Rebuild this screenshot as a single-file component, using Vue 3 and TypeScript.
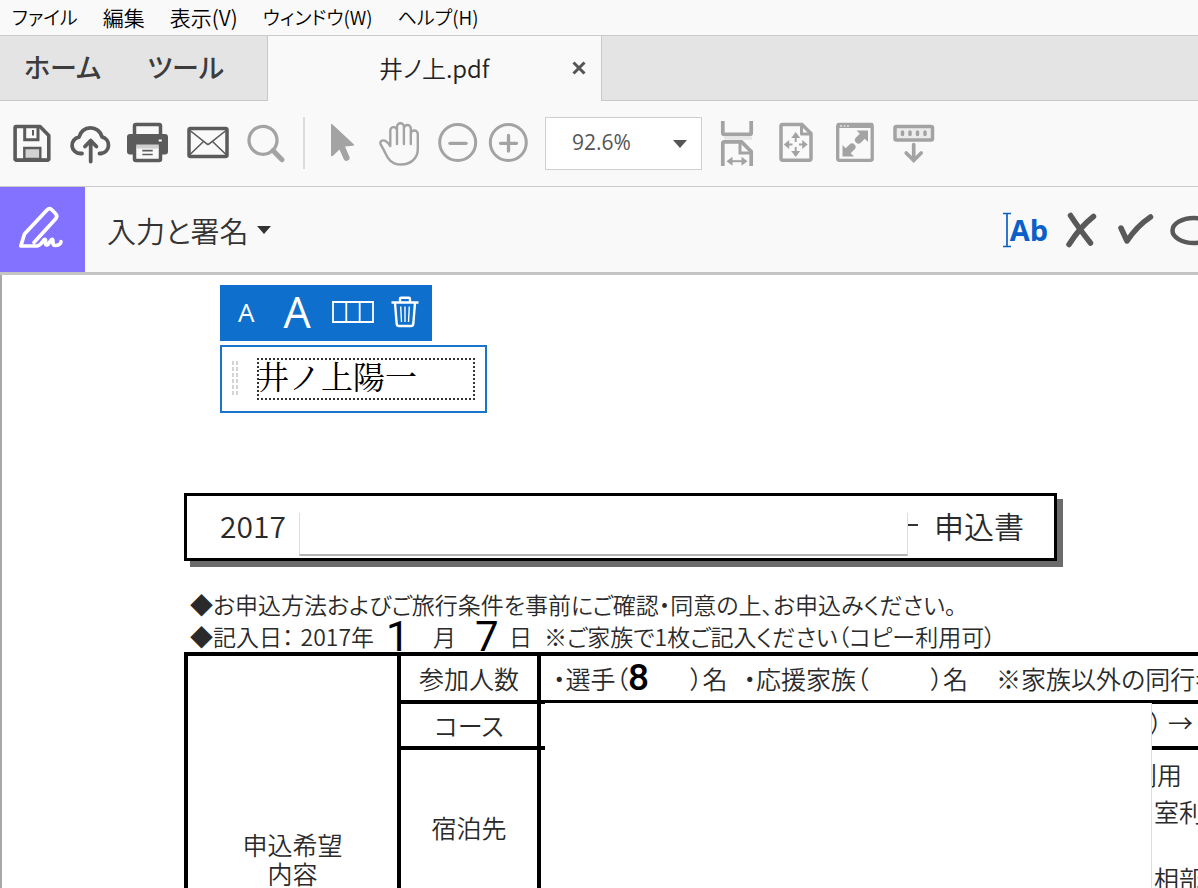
<script setup lang="ts">
import { ref } from 'vue'

interface Menu { label: string; kana: boolean }

const menus: Menu[] = [
  { label: 'ファイル', kana: true },
  { label: '編集', kana: false },
  { label: '表示(V)', kana: false },
  { label: 'ウィンドウ(W)', kana: true },
  { label: 'ヘルプ(H)', kana: true },
]
const zoom = ref('92.6%')
const typed = ref('井ノ上陽一')
</script>

<template>
  <div class="app">
    <nav class="menubar" aria-label="メニュー">
      <button v-for="m in menus" :key="m.label" type="button" :class="{ kana: m.kana }">{{ m.label }}</button>
    </nav>

    <div class="tabs">
      <div class="fixed-tabs">
        <button type="button">ホーム</button>
        <button type="button">ツール</button>
      </div>
      <div class="doc-tab">
        <span class="doc-name">井ノ上.pdf</span>
        <button type="button" class="close" aria-label="閉じる">
          <svg width="14" height="14" viewBox="0 0 14 14"><path d="M1.5 1.5L12.5 12.5M12.5 1.5L1.5 12.5" stroke="#555" stroke-width="3" /></svg>
        </button>
      </div>
      <div class="tab-rest"></div>
    </div>

    <div class="toolbar">
      <div class="group files">
        <button type="button" aria-label="保存">
          <svg viewBox="0 0 44 44" fill="none" stroke="#5b5b5b" stroke-width="3.6" stroke-linejoin="round">
            <path d="M7 5.5H31L39.8 14.5V38a1.2 1.2 0 0 1-1.2 1.2H7.3A1.2 1.2 0 0 1 6.1 38V6.7Q6.1 5.5 7 5.5Z" />
            <path d="M15.7 6V18.7H29V6" stroke-width="3" stroke-linejoin="miter" />
            <path d="M24 9V14.5" stroke-width="2" />
            <path d="M15.3 38V27H31.3V38Z" fill="#d2d2d2" stroke-width="2.4" stroke-linejoin="miter" />
            <path d="M7 39.2H39" />
          </svg>
        </button>
        <button type="button" aria-label="アップロード">
          <svg viewBox="0 0 44 44" fill="none" stroke="#5b5b5b" stroke-width="3.8" stroke-linecap="round" stroke-linejoin="round">
            <path d="M14 32.5H12.5A8.2 8.2 0 0 1 11 16.2A11.8 11.8 0 0 1 34 15.8A8.5 8.5 0 0 1 33 32.5H31.5" />
            <path d="M22.7 40.5V20M17 25.5L22.7 19.5L28.4 25.5" />
          </svg>
        </button>
        <button type="button" aria-label="印刷">
          <svg viewBox="0 0 44 44" fill="none">
            <path d="M7.5 14V5a1.5 1.5 0 0 1 1.5-1.5H32A1.5 1.5 0 0 1 33.5 5V14" stroke="#5b5b5b" stroke-width="3.5" />
            <rect x="0" y="13" width="41" height="20.5" rx="3" fill="#5b5b5b" />
            <rect x="7.5" y="24" width="26" height="15.5" rx="1.5" fill="#f9f9f9" stroke="#5b5b5b" stroke-width="3.5" />
            <rect x="9.2" y="23.5" width="22.6" height="4" fill="#cfcfcf" />
            <path d="M15.3 29.7H25.7M15.3 33.5H25.7" stroke="#5b5b5b" stroke-width="1.7" />
            <rect x="31.5" y="18.5" width="3.5" height="2" rx="1" fill="#fff" />
          </svg>
        </button>
        <button type="button" aria-label="メール">
          <svg viewBox="0 0 44 44" fill="none" stroke="#5b5b5b" stroke-width="3.5">
            <rect x="3" y="7.5" width="38" height="28" rx="1.5" />
            <path d="M4 9.5L20.5 22.7Q22 24 23.5 22.7L40 9.5M4 33.5L17.5 20.5M40 33.5L26.5 20.5" stroke-width="1.6" />
          </svg>
        </button>
        <button type="button" aria-label="検索">
          <svg viewBox="0 0 44 44" fill="none" stroke="#a3a3a3">
            <circle cx="18" cy="19.3" r="14" stroke-width="3.3" />
            <path d="M28 29.5L37 38.7" stroke-width="5" stroke-linecap="round" />
          </svg>
        </button>
      </div>
      <div class="divider"></div>
      <div class="group nav">
        <button type="button" aria-label="選択">
          <svg viewBox="0 0 44 44" fill="#a3a3a3">
            <path d="M11 4Q11 2 12.5 3.5L33.5 23Q35 24.5 33 24.8L25 25.5L29.3 35.5A3 3 0 0 1 23.7 38L19.5 28.5L13 34.8Q11 36 11 34Z" />
          </svg>
        </button>
        <button type="button" aria-label="手のひら">
          <svg viewBox="0 0 44 44" fill="none" stroke="#a3a3a3" stroke-width="2.4" stroke-linecap="round" stroke-linejoin="round">
            <path d="M12.3 24.5V9.5a3.3 3.3 0 0 1 6.7 0V23M19 10V5.7a3.4 3.4 0 0 1 6.9 0V23M25.9 7.5a3.4 3.4 0 0 1 6.9 0V23M32.8 13a3.5 3.5 0 0 1 7 0V28C39.8 38 32 43.5 23 43.5C13 43.5 9.5 37 7 31.5C4.5 26 2.8 24.5 2.4 22.5C2 19.5 5.5 18.7 7.5 20Q10 21.5 12.3 25" />
          </svg>
        </button>
        <button type="button" aria-label="縮小">
          <svg viewBox="0 0 44 44" fill="none" stroke="#a3a3a3" stroke-width="3">
            <circle cx="21.7" cy="21.5" r="18" /><path d="M14 22.3H30" stroke-width="3.3" stroke-linecap="round" />
          </svg>
        </button>
        <button type="button" class="near" aria-label="拡大">
          <svg viewBox="0 0 44 44" fill="none" stroke="#a3a3a3" stroke-width="3">
            <circle cx="22.3" cy="21.5" r="18" /><path d="M14.5 22.3H30.5M22.5 14.5V30" stroke-width="3.3" stroke-linecap="round" />
          </svg>
        </button>
      </div>
      <div class="zoom">
        <select v-model="zoom" aria-label="表示倍率">
          <option>92.6%</option>
          <option>100%</option>
          <option>150%</option>
        </select>
        <svg width="14" height="8" viewBox="0 0 14 8"><path d="M0 0H14L7 8Z" fill="#555" /></svg>
      </div>
      <div class="group files">
        <button type="button" aria-label="幅に合わせる">
          <svg viewBox="0 0 44 44" fill="none" stroke="#a3a3a3" stroke-width="3.7">
            <path d="M7.8 0V12a1.3 1.3 0 0 0 1.3 1.3H34.9A1.3 1.3 0 0 0 36.2 12V0" />
            <path d="M9 17.2H37" stroke="#e6e6e6" stroke-width="3" />
            <path d="M7.8 45V22.2a1.3 1.3 0 0 1 1.3-1.3H26.5L36.2 30.5V45" />
            <path d="M25 21V32H36" stroke-width="3" />
            <path d="M15 40.2H29" stroke-width="2" />
            <path d="M11.5 40.2L17.5 35.7V44.7ZM32.5 40.2L26.5 35.7V44.7Z" fill="#a3a3a3" stroke="none" />
          </svg>
        </button>
        <button type="button" aria-label="全体表示">
          <svg viewBox="0 0 44 44" fill="none" stroke="#a3a3a3" stroke-width="3.5" stroke-linejoin="round">
            <path d="M8.5 3.6H28L37 12.6V37.7a1.5 1.5 0 0 1-1.5 1.5H8.5A1.5 1.5 0 0 1 7 37.7V5.1a1.5 1.5 0 0 1 1.5-1.5Z" />
            <path d="M27.5 4V13H36.5" stroke-width="3" />
            <path d="M21.7 15V21M21.7 26V32M13 23.5H18.5M25 23.5H30.5" stroke-width="2" />
            <path d="M21.7 11L26.2 17H17.2ZM21.7 36L26.2 30H17.2ZM9.7 23.5L15.2 19V28ZM33.7 23.5L28.2 19V28Z" fill="#a3a3a3" stroke="none" />
          </svg>
        </button>
        <button type="button" aria-label="全画面">
          <svg viewBox="0 0 44 44" fill="none" stroke="#a3a3a3" stroke-width="3.3">
            <rect x="4.7" y="3.5" width="34.5" height="35.8" rx="1.5" />
            <path d="M4 4.5H40" stroke-width="5" />
            <path d="M7 5H9M10.5 5H12.5M14 5H16" stroke="#fff" stroke-width="1.2" />
            <path d="M35 9.5V21L31.8 17.8L28 21.5A3 3 0 0 1 23 16.5L26.8 12.8L23.5 9.5ZM9.5 35.5V24L12.7 27.2L16.5 23.5A3 3 0 0 1 21.5 28.5L17.7 32.2L21 35.5Z" fill="#a3a3a3" stroke="none" />
          </svg>
        </button>
        <button type="button" aria-label="ツールを表示">
          <svg viewBox="0 0 44 44" fill="none" stroke="#a3a3a3" stroke-width="3.5">
            <rect x="3" y="5.5" width="37.5" height="13.5" rx="1.5" fill="#ececec" />
            <path d="M10.5 11V13.5M18 11V13.5M25.5 11V13.5M33 11V13.5" stroke-width="3.5" stroke-linecap="round" />
            <path d="M21.7 23.5V39M14.2 32L21.7 39.5L29.2 32" stroke-width="3.7" stroke-linecap="round" />
          </svg>
        </button>
      </div>
    </div>

    <div class="signbar">
      <div class="badge">
        <svg viewBox="0 0 85 85" fill="none" stroke="#fff" stroke-width="3.7" stroke-linecap="round" stroke-linejoin="round">
          <path d="M34 55.5L55.5 32Q58 29 55.5 26.5L51.5 22.5Q49.3 20.5 47 23L24.5 47L20.8 59H37C41.5 58.5 42.5 53.5 44.5 52.5C47 51.5 44 57.5 46.5 58C49 58.5 50.5 51.5 52.5 52.5C54 53.5 51.5 58.5 55 58.5C58.5 58.5 61 57 61 54.5" />
        </svg>
      </div>
      <button type="button" class="sign-menu">
        <span>入力と署名</span>
        <svg width="14" height="8" viewBox="0 0 14 8"><path d="M0 0H14L7 8Z" fill="#333" /></svg>
      </button>
      <div class="sign-tools">
        <button type="button" class="text-tool" aria-label="テキストを追加">
          <svg width="10" height="36" viewBox="0 0 10 36" fill="none" stroke="#0b60c8" stroke-width="1.7"><path d="M1 1.5H9M1 34.5H9M5 1.5V34.5" /></svg>
          <span>Ab</span>
        </button>
        <button type="button" aria-label="バツ印">
          <svg width="36" height="40" viewBox="0 0 36 40" fill="none" stroke="#595959" stroke-width="5.5" stroke-linecap="round"><path d="M6.5 5.5Q14 17 26.5 33M29.5 6.5Q16 17 5 34.5" /></svg>
        </button>
        <button type="button" aria-label="チェック">
          <svg width="40" height="40" viewBox="0 0 40 40" fill="none" stroke="#595959" stroke-width="5.5" stroke-linecap="round" stroke-linejoin="round"><path d="M5 18L11 31Q21 16 34.5 7" /></svg>
        </button>
        <button type="button" class="cut" aria-label="円">
          <svg width="54" height="40" viewBox="0 0 54 40" fill="none" stroke="#595959" stroke-width="4.5"><ellipse cx="25" cy="20.5" rx="21.5" ry="12.5" /></svg>
        </button>
      </div>
    </div>

    <main class="page">
      <div class="annotation">
        <div class="mini">
          <button type="button" class="small-a">A</button>
          <button type="button" class="big-a">A</button>
          <button type="button" class="comb" aria-label="マス目">
            <svg width="42" height="22" viewBox="0 0 42 22" fill="none" stroke="#fff" stroke-width="1.8"><path d="M1 1H41V21H1ZM14.3 1V21M27.7 1V21" /></svg>
          </button>
          <button type="button" aria-label="削除">
            <svg width="28" height="32" viewBox="0 0 28 32" fill="none" stroke="#fff" stroke-width="2.4" stroke-linejoin="round">
              <path d="M.5 6.5H27.5M9 6V3Q9 1.8 10.2 1.8H17.8Q19 1.8 19 3V6M4 7L5.7 28Q6 30 8 30H20Q22 30 22.3 28L24 7" />
              <path d="M9.7 10.5L10.5 26M14 10.5V26M18.3 10.5L17.5 26" stroke-width="1.4" />
            </svg>
          </button>
        </div>
        <div class="field">
          <svg width="6" height="36" viewBox="0 0 6 36" fill="none" stroke="#d4d4d4" stroke-width="2"><path d="M1 0V36M5 0V36" stroke-dasharray="4 2" /></svg>
          <input v-model="typed" aria-label="テキスト" />
        </div>
      </div>

      <section class="form">
        <h1 class="title">
          <span>2017</span>
          <span class="patch"></span>
          <span class="dash"></span>
          <span>申込書</span>
        </h1>
        <p class="note">◆お申込方法およびご旅行条件を事前にご確認・同意の上、お申込みください。</p>
        <p class="note date">
          <span>◆記入日：</span>
          <span class="year">2017年</span>
          <span class="typed">1</span>
          <span class="month">月</span>
          <span class="typed">7</span>
          <span class="day">日</span>
          <span>※ご家族で1枚ご記入ください（コピー利用可）</span>
        </p>
        <div class="sheet">
          <table>
            <colgroup><col class="c1" /><col class="c2" /><col /></colgroup>
            <tbody>
              <tr class="r1">
                <th rowspan="4">申込希望<br />内容</th>
                <th>参加人数</th>
                <td>
                  <div class="people">
                    <span>・選手（</span><b>8</b><span class="rest">）名</span><span class="gap">・応援家族（</span><span class="blank">）名</span><span class="other">※家族以外の同行者</span>
                  </div>
                </td>
              </tr>
              <tr class="r2"><th>コース</th><td class="right">） →</td></tr>
              <tr class="r3">
                <th>宿泊先</th>
                <td class="stay"><div>利用</div><div class="room">室利用</div><div class="share">相部屋</div></td>
              </tr>
              <tr class="r3"><th></th><td></td></tr>
            </tbody>
          </table>
          <div class="cover"></div>
        </div>
      </section>
    </main>
  </div>
</template>

<style>
html, body { margin: 0; height: 100%; overflow: hidden; }
</style>

<style scoped>
.app { height: 100vh; display: flex; flex-direction: column; background: #f9f9f9; color: #000; overflow: hidden; font-family: "Noto Sans CJK JP", sans-serif; font-feature-settings: "palt"; white-space: nowrap; }
button { border: 0; padding: 0; margin: 0; background: none; font: inherit; color: inherit; font-feature-settings: inherit; flex: none; }
svg { display: block; }
.menubar { flex: none; height: 35px; display: flex; align-items: center; gap: 25px; padding-left: 12px; border-bottom: 1px solid #cacaca; font-size: 21px; font-weight: 350; line-height: 32px; }
.menubar .kana { font-size: 19px; }
.menubar button { padding-bottom: 2px; }
.tabs { flex: none; display: flex; height: 65px; }
.fixed-tabs { box-sizing: border-box; width: 268px; display: flex; gap: 46px; padding: 0 0 3px 24px; background: #e4e4e4; border-right: 1px solid #c8c8c8; border-bottom: 1px solid #c8c8c8; font-size: 27px; font-weight: 500; color: #3c3c3c; }
.doc-tab { box-sizing: border-box; width: 333px; display: flex; align-items: center; padding: 0 15px 2px 111px; font-size: 24px; font-weight: 350; color: #222; }
.close { margin-left: auto; }
.tab-rest { flex: 1; background: #e4e4e4; border-left: 1px solid #c8c8c8; border-bottom: 1px solid #c8c8c8; }
.toolbar { flex: none; box-sizing: border-box; height: 86px; display: flex; align-items: flex-start; padding: 16px 0 0 9px; border-bottom: 1px solid #cacaca; }
.group { display: flex; padding-top: 4px; }
.group svg { width: 44px; height: 44px; overflow: visible; }
.files { gap: 15px; }
.nav { gap: 14px; }
.near { margin-left: -8px; }
.divider { width: 2px; height: 52px; background: #dcdcdc; margin: 0 15px 0 14px; }
.zoom { position: relative; margin: 0 13px 0 15px; }
.zoom select { appearance: none; box-sizing: border-box; display: block; width: 157px; height: 53px; border: 1px solid #cfcfcf; border-radius: 0; background: #fff; padding: 0 26px 4px; font: 21px "Open Sans", sans-serif; color: #555; }
.zoom svg { position: absolute; right: 15px; top: 23px; pointer-events: none; }
.signbar { flex: none; display: flex; height: 85px; border-bottom: 3px solid #c4c4c4; overflow: hidden; }
.badge { width: 85px; background: #8371ff; flex: none; }
.sign-menu { display: flex; align-items: center; gap: 8px; margin-left: 22px; font-size: 29px; line-height: 82px; color: #333; font-weight: 350; }
.sign-tools { margin-left: auto; display: flex; align-items: center; gap: 16px; }
.text-tool { display: flex; align-items: center; color: #0b60c8; font: 700 29px/36px "Open Sans", sans-serif; }
.text-tool span { margin-left: -2px; }
.cut { width: 29px; overflow: hidden; margin-left: -3px; }
.page { flex: 1; min-height: 0; position: relative; background: #fff; border-left: 2px solid #a8a8a8; overflow: hidden; }
.annotation { position: absolute; left: 218px; top: 10px; }
.mini { box-sizing: border-box; width: 212px; height: 56px; background: #0f6fcc; color: #fff; display: flex; align-items: center; gap: 17px; padding: 0 0 3px 18px; font-family: "Open Sans", sans-serif; }
.small-a { font-size: 26px; margin-right: 12px; }
.big-a { font-size: 43px; line-height: 50px; }
.comb { margin-left: 4px; }
.field { box-sizing: border-box; width: 267px; height: 68px; margin-top: 4px; border: 2px solid #1a74c9; background: #fff; display: flex; align-items: center; padding: 0 10px; gap: 19px; }
.field input { box-sizing: border-box; flex: 1; min-width: 0; height: 42px; padding: 0 0 8px; text-indent: -2px; border: 2px dotted #333; border-radius: 0; outline: 0; background: none; font: 32px/30px "Noto Serif CJK JP", "Noto Sans CJK JP", serif; color: #000; }
.form { padding: 218px 0 0 182px; color: #2a2a2a; font-weight: 350; }
.title { box-sizing: border-box; width: 873px; height: 68px; margin: 0; display: flex; align-items: center; padding: 0 29px 4px 33px; border: 3px solid #000; box-shadow: 6px 6px 0 #6b6b6b; background: #fff; font-size: 30px; font-weight: 350; }
.patch { flex: none; width: 609px; height: 43px; margin: 18px 0 0 13px; box-sizing: border-box; border: solid #ddd; border-width: 0 1px 2px; border-bottom-color: #b4b4b4; }
.dash { flex: none; width: 10px; height: 2px; background: #333; margin-right: 16px; }
.note { margin: 0; padding-left: 6px; font-size: 23px; line-height: 32px; }
.title + .note { margin-top: 27px; }
.date { display: flex; height: 32px; }
.typed { width: 24px; font: 42px/34px Roboto, sans-serif; color: #000; }
.year { margin: 0 12px 0 7px; }
.month { margin: 0 19px 0 23px; }
.day { margin: 0 12px 0 10px; }
.sheet { position: relative; }
table { table-layout: fixed; width: 1200px; border-collapse: separate; border-spacing: 0; border: solid #000; border-width: 4px 0 0 4px; font-size: 25px; line-height: 29px; }
.c1 { width: 213px; }
.c2 { width: 140px; }
th, td { box-sizing: border-box; padding: 0; border: solid #000; border-width: 0 4px 4px 0; font-weight: 350; text-align: center; }
td { text-align: left; }
.r1 { height: 48px; }
.r2 { height: 46px; }
.r3 { height: 158px; }
.people { display: flex; align-items: center; padding-left: 12px; height: 44px; }
.people b { font: 500 37px/40px Roboto, sans-serif; color: #000; }
.rest { margin-left: 41px; }
.gap { margin-left: 16px; }
.blank { margin-left: 62px; }
.other { margin-left: 28px; }
td.right { padding: 0 0 5px 609px; }
td.stay { padding: 10px 0 0 591px; vertical-align: top; }
.room { margin: 8px 0 0 22px; }
.share { margin: 38px 0 0 22px; }
.cover { position: absolute; left: 361px; top: 51px; bottom: 0; width: 606px; background: #fff; border-right: 1px solid #ddd; }
</style>
